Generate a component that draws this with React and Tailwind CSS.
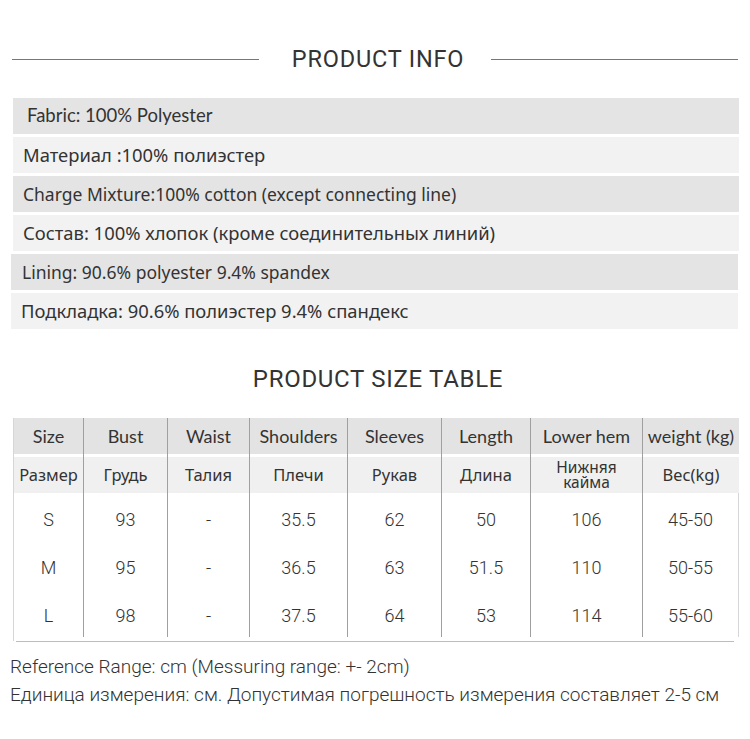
const infoRows = [
  { text: 'Fabric: 100% Polyester', bg: 'bg-[#e4e4e4]', pad: 'pl-[14px] ml-[13px] w-[726px]', size: 'text-[18.5px]', font: 'lato' },
  { text: 'Материал :100% полиэстер', bg: 'bg-[#f2f2f2]', pad: 'pl-[10px] ml-[13px] w-[726px]', size: 'text-[18.4px]', font: 'noto' },
  { text: 'Charge Mixture:100% cotton (except connecting line)', bg: 'bg-[#e4e4e4]', pad: 'pl-[10px] ml-[13px] w-[726px]', size: 'text-[17.5px]', font: 'noto' },
  { text: 'Состав: 100% хлопок (кроме соединительных линий)', bg: 'bg-[#f2f2f2]', pad: 'pl-[10px] ml-[13px] w-[726px]', size: 'text-[18.4px]', font: 'noto' },
  { text: 'Lining: 90.6% polyester 9.4% spandex', bg: 'bg-[#e4e4e4]', pad: 'pl-[11px] ml-[11px] w-[727px]', size: 'text-[17.5px]', font: 'noto' },
  { text: 'Подкладка: 90.6% полиэстер 9.4% спандекс', bg: 'bg-[#f2f2f2]', pad: 'pl-[10px] ml-[11px] w-[727px]', size: 'text-[18.4px]', font: 'noto' },
];

const cols = 'grid grid-cols-[70px_84px_82px_98px_94px_89px_112px_97px]';

const headEn = ['Size', 'Bust', 'Waist', 'Shoulders', 'Sleeves', 'Length', 'Lower hem', 'weight (kg)'];
const headRu = ['Размер', 'Грудь', 'Талия', 'Плечи', 'Рукав', 'Длина', 'Нижняя\nкайма', 'Вес(kg)'];
const data = [
  ['S', '93', '-', '35.5', '62', '50', '106', '45-50'],
  ['M', '95', '-', '36.5', '63', '51.5', '110', '50-55'],
  ['L', '98', '-', '37.5', '64', '53', '114', '55-60'],
];

const fonts = {
  lato: "font-['Lato','Noto_Sans',sans-serif]",
  noto: "font-['Noto_Sans',sans-serif]",
};

export default function App() {
  return (
    <div className="w-[750px] h-[739px] bg-white text-[#333] overflow-hidden">
      <div className="flex items-center pt-[45px] px-[12px]">
        <div className="flex-1 h-px bg-[#777]" />
        <h2 className="ml-[33px] mr-[27px] text-[23.5px] leading-[28px] tracking-[0.8px] font-['Roboto',sans-serif]">
          PRODUCT INFO
        </h2>
        <div className="flex-1 h-px bg-[#777]" />
      </div>

      <div className="mt-[25px] flex flex-col gap-[3px]">
        {infoRows.map((r) => (
          <div key={r.text} className={`h-[36px] flex items-center ${r.size} ${r.bg} ${r.pad} ${fonts[r.font]}`}>
            {r.text}
          </div>
        ))}
      </div>

      <h2 className="mt-[36px] ml-[6px] text-center text-[24px] leading-[28px] tracking-[0.7px] font-['Roboto',sans-serif]">
        PRODUCT SIZE TABLE
      </h2>

      <div className="mt-[25px] ml-[13px] w-[726px]">
        <div className={`${cols} bg-[#e3e3e3] h-[36px]`}>
          {headEn.map((h, i) => (
            <div
              key={h}
              className={`flex items-center justify-center text-[18px] font-['Lato',sans-serif] ${i === 0 ? 'border-l border-[#d6d6d6]' : 'border-l border-[#a0a0a0]'}`}
            >
              {h}
            </div>
          ))}
        </div>
        <div className={`${cols} h-[39px]`}>
          {headRu.map((h, i) => (
            <div
              key={h}
              className={`flex items-center justify-center pt-[3px] bg-[#f0f0f0] shadow-[inset_0_3px_0_white] text-center whitespace-pre-line font-['Noto_Sans',sans-serif] ${
                h.includes('\n') ? 'text-[15.5px] leading-[15px]' : 'text-[16.5px]'
              } ${i === 0 ? 'border-l border-[#d6d6d6]' : 'border-l border-[#a0a0a0]'}`}
            >
              {h}
            </div>
          ))}
        </div>
        {data.map((row) => (
          <div key={row[0]} className={`${cols} h-[48px]`}>
            {row.map((c, i) => (
              <div
                key={i}
                className={`flex items-center justify-center pt-[5px] text-[18px] font-['Roboto',sans-serif] font-light ${
                  i === 0 ? 'border-l border-[#d6d6d6]' : 'border-l border-[#a0a0a0]'
                } ${i === 7 ? 'border-r border-r-[#d6d6d6]' : ''}`}
              >
                {c}
              </div>
            ))}
          </div>
        ))}
        <div className="h-[4px] border-l border-[#d6d6d6]" />
        <div className="ml-[3px] w-[718px] h-px bg-[#bdbdbd]" />
      </div>

      <div className="mt-[11px] pl-[10px] text-[19px] leading-[28px] font-['Roboto',sans-serif] font-light">
        <p>Reference Range: cm (Messuring range: +- 2cm)</p>
        <p>Единица измерения: см. Допустимая погрешность измерения составляет 2-5 см</p>
      </div>
    </div>
  );
}
